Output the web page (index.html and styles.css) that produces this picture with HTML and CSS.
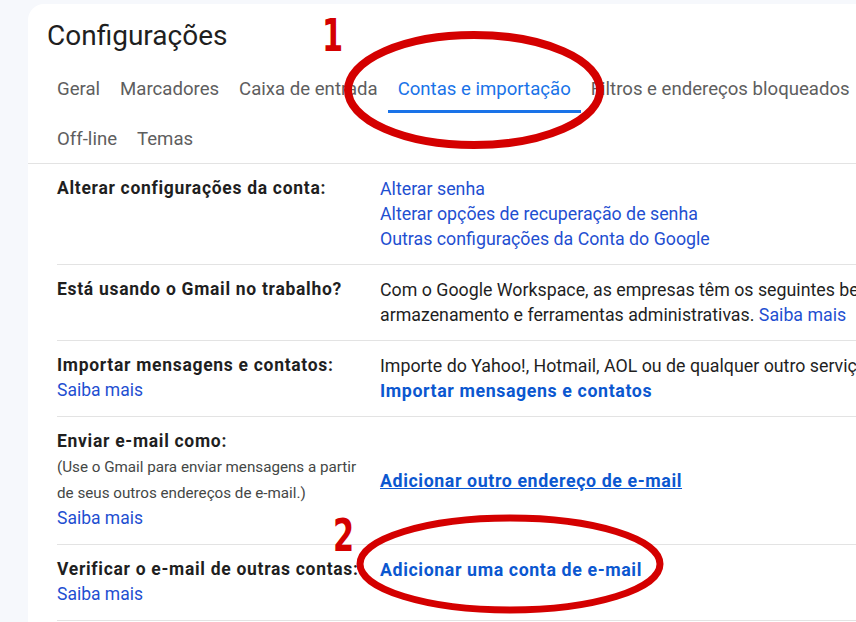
FILE: index.html
```html
<!DOCTYPE html>
<html lang="pt-BR">
<head>
  <meta charset="UTF-8" />
  <meta name="viewport" content="width=device-width, initial-scale=1.0"/>
  <title>Configurações - Gmail</title>
  <link rel="stylesheet" href="styles.css">
</head>
<body>
  <div class="card">
    <h1 class="title">Configurações</h1>

    <nav class="tabs">
      <a class="tab">Geral</a>
      <a class="tab">Marcadores</a>
      <a class="tab">Caixa de entrada</a>
      <a class="tab active">Contas e importação</a>
      <a class="tab">Filtros e endereços bloqueados</a>
      <a class="tab">Off-line</a>
      <a class="tab">Temas</a>
    </nav>

    <table class="settings">
      <tbody>
        <tr>
          <td class="label"><b>Alterar configurações da conta:</b></td>
          <td class="value">
            <a class="link">Alterar senha</a><br>
            <a class="link">Alterar opções de recuperação de senha</a><br>
            <a class="link">Outras configurações da Conta do Google</a>
          </td>
        </tr>
        <tr>
          <td class="label"><b>Está usando o Gmail no trabalho?</b></td>
          <td class="value">
            Com o Google Workspace, as empresas têm os seguintes benefícios: e-mail personalizado, mais espaço de<br>
            armazenamento e ferramentas administrativas. <a class="link">Saiba mais</a>
          </td>
        </tr>
        <tr>
          <td class="label">
            <b>Importar mensagens e contatos:</b><br>
            <a class="link">Saiba mais</a>
          </td>
          <td class="value">
            Importe do Yahoo!, Hotmail, AOL ou de qualquer outro serviço de webmail ou POP3.<br>
            <a class="link strong">Importar mensagens e contatos</a>
          </td>
        </tr>
        <tr>
          <td class="label">
            <b>Enviar e-mail como:</b>
            <div class="note">(Use o Gmail para enviar mensagens a partir<br>de seus outros endereços de e-mail.)</div>
            <a class="link">Saiba mais</a>
          </td>
          <td class="value middle">
            <a class="link strong underline">Adicionar outro endereço de e-mail</a>
          </td>
        </tr>
        <tr>
          <td class="label">
            <b>Verificar o e-mail de outras contas:</b><br>
            <a class="link">Saiba mais</a>
          </td>
          <td class="value">
            <a class="link strong">Adicionar uma conta de e-mail</a>
          </td>
        </tr>
      </tbody>
    </table>
  </div>

  <!-- marcações em vermelho por cima da captura -->
  <svg class="marks" width="856" height="622" viewBox="0 0 856 622">
    <ellipse cx="474" cy="90" rx="126" ry="55" fill="none" stroke="#d40000" stroke-width="8"/>
    <ellipse cx="510" cy="564" rx="150" ry="46" fill="none" stroke="#d40000" stroke-width="7"/>
  </svg>
  <span class="num num-1">1</span>
  <span class="num num-2">2</span>
</body>
</html>
```

FILE: styles.css
```css
body {
  margin: 0;
  background-color: #f6f8fc;
  font-family: Roboto, "Open Sans", sans-serif;
  color: #1f1f1f;
  overflow: hidden;
  height: 622px;
}

.card {
  margin: 4px 0 0 28px;
  width: 1200px;
  min-height: 640px;
  background-color: white;
  border-top-left-radius: 16px;
}

.title {
  margin: 0;
  padding: 14px 0 0 19px;
  height: 45px;
  font-size: 28px;
  font-weight: 400;
  line-height: 36px;
  color: #1f1f1f;
}

.tabs {
  display: flex;
  flex-wrap: wrap;
  padding-left: 19px;
  width: 850px;
  border-bottom: 1px solid #e3e3e3;
}

.tab {
  box-sizing: border-box;
  height: 50px;
  padding: 2px 10px 0;
  line-height: 48px;
  font-size: 18.6px;
  color: #5e5e5e;
  cursor: pointer;
}

.tab.active {
  color: #1a73e8;
  border-bottom: 3px solid #1a73e8;
}

.settings {
  margin-left: 29px;
  border-collapse: collapse;
  line-height: 25px;
}

.settings tr {
  border-bottom: 1px solid #e3e3e3;
}

.settings td {
  padding: 12px 0 13px;
  vertical-align: top;
  white-space: nowrap;
}

.label {
  width: 323px;
  font-size: 17.5px;
}

.value {
  font-size: 17.8px;
}

.label b {
  font-weight: 700;
  letter-spacing: 0.7px;
  color: #1f1f1f;
}

.value.middle {
  vertical-align: middle;
}

.note {
  font-size: 15.2px;
  line-height: 26px;
  color: #444746;
}

.link {
  color: #1f4fd1;
  cursor: pointer;
}

.link.strong {
  font-weight: 700;
  letter-spacing: 0.6px;
  color: #0b57d0;
}

.link.underline {
  text-decoration: underline;
}

.marks {
  position: absolute;
  left: 0;
  top: 0;
  pointer-events: none;
}

.num {
  position: absolute;
  font-family: "DejaVu Sans Condensed", "DejaVu Sans", sans-serif;
  font-weight: bold;
  font-size: 45px;
  line-height: 1;
  color: #d40000;
  transform: scaleX(0.75);
  transform-origin: left top;
}

.num-1 {
  left: 322px;
  top: 13px;
}

.num-2 {
  left: 333px;
  top: 513px;
}
```
